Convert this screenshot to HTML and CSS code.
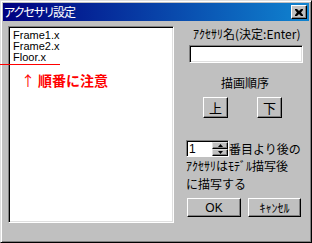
FILE: index.html
```html
<!DOCTYPE html>
<html>
<head>
    <meta charset="UTF-8">
    <meta name="viewport" content="width=device-width, initial-scale=1.0">
    <title>アクセサリ設定</title>
    <link rel="stylesheet" href="styles.css">
</head>
<body>
    <div class="window">
        <div class="title-bar">
            <div class="title-text">アクセサリ設定</div>
            <div class="close-btn">
                <svg width="8" height="7" viewBox="0 0 8 7">
                    <path d="M0 0h2l2 2 2-2h2v1l-2 2.5 2 2.5v1h-2l-2-2-2 2h-2v-1l2-2.5-2-2.5z" fill="#000"/>
                </svg>
            </div>
        </div>
        <div class="dialog-body">
            <div class="list-box">
                <div class="list-item">Frame1.x</div>
                <div class="list-item">Frame2.x</div>
                <div class="list-item">Floor.x</div>
                <div class="note"><span class="note-arrow">↑</span>順番に注意</div>
            </div>
            <div class="side-panel">
                <div class="label name-label">ｱｸｾｻﾘ名(決定:Enter)</div>
                <div class="text-box"></div>
                <div class="label order-label">描画順序</div>
                <div class="order-buttons">
                    <div class="button small-btn">上</div>
                    <div class="button small-btn">下</div>
                </div>
                <div class="spin-row">
                    <div class="spin-box">
                        <div class="spin-field">1</div>
                        <div class="spin-arrows">
                            <div class="spin-btn">
                                <svg width="5" height="3" viewBox="0 0 5 3"><path d="M2.5 0L5 3H0z" fill="#000"/></svg>
                            </div>
                            <div class="spin-btn">
                                <svg width="5" height="3" viewBox="0 0 5 3"><path d="M0 0h5L2.5 3z" fill="#000"/></svg>
                            </div>
                        </div>
                    </div>
                    <span class="label">番目より後の</span>
                </div>
                <div class="label desc">ｱｸｾｻﾘはﾓﾃﾞﾙ描写後<br>に描写する</div>
                <div class="bottom-buttons">
                    <div class="button ok-btn">OK</div>
                    <div class="button cancel-btn">ｷｬﾝｾﾙ</div>
                </div>
            </div>
        </div>
        <div class="red-line"></div>
    </div>
</body>
</html>
```

FILE: styles.css
```css
body {
    margin: 0;
    font-family: "Noto Sans CJK JP", "Liberation Sans", sans-serif;
    font-size: 12px;
    background: #c0c0c0;
}
.window {
    position: relative;
    width: 312px;
    height: 243px;
    box-sizing: border-box;
    background: #c0c0c0;
    border: 1px solid;
    border-color: #dfdfdf #000 #000 #dfdfdf;
    box-shadow: inset 1px 1px #fff, inset -1px -1px #808080;
    padding: 2px;
}
.title-bar {
    height: 18px;
    display: flex;
    align-items: center;
    justify-content: space-between;
    background: linear-gradient(to right, #000080, #1084d0);
    padding: 0 2px 0 1px;
}
.title-text {
    color: #fff;
    font-size: 12px;
    line-height: 18px;
    font-feature-settings: "palt";
    letter-spacing: -1px;
}
.close-btn {
    width: 16px;
    height: 14px;
    box-sizing: border-box;
    background: #c0c0c0;
    border: 1px solid;
    border-color: #fff #000 #000 #fff;
    box-shadow: inset -1px -1px #808080;
    display: flex;
    align-items: center;
    justify-content: center;
    padding-right: 1px;
}
.dialog-body {
    display: flex;
    padding: 5px 0 0 5px;
}
.list-box {
    width: 166px;
    height: 197px;
    box-sizing: border-box;
    background: #fff;
    border: 1px solid;
    border-color: #808080 #fff #fff #808080;
    box-shadow: inset 1px 1px #000, inset -1px -1px #dfdfdf;
    padding: 3px 3px;
}
.list-item {
    font-family: "Liberation Sans", sans-serif;
    font-size: 11px;
    line-height: 11px;
    height: 11px;
    padding-left: 1px;
    color: #000;
}
.note {
    margin-top: 9px;
    padding-left: 9px;
    color: #ff0000;
    font-size: 14px;
    font-weight: bold;
    line-height: 16px;
}
.note-arrow {
    display: inline-block;
    width: 17px;
    font-weight: normal;
}
.red-line {
    position: absolute;
    left: -1px;
    top: 63px;
    width: 60px;
    height: 1px;
    background: #ff0000;
}
.side-panel {
    margin-left: 12px;
    width: 118px;
    display: flex;
    flex-direction: column;
}
.label {
    color: #000;
    font-size: 12px;
    line-height: 13px;
    white-space: nowrap;
}
.name-label {
    margin-top: 1px;
    padding-left: 7px;
}
.text-box {
    margin-top: 5px;
    margin-left: 3px;
    width: 114px;
    height: 18px;
    box-sizing: border-box;
    background: #fff;
    border: 1px solid;
    border-color: #808080 #fff #fff #808080;
    box-shadow: inset 1px 1px #000, inset -1px -1px #dfdfdf;
}
.order-label {
    margin-top: 13px;
    text-align: center;
}
.order-buttons {
    display: flex;
    gap: 29px;
    margin-top: 8px;
    padding-left: 17px;
}
.button {
    box-sizing: border-box;
    background: #c0c0c0;
    border: 1px solid;
    border-color: #fff #000 #000 #fff;
    box-shadow: inset -1px -1px #808080;
    display: flex;
    align-items: center;
    justify-content: center;
    color: #000;
    font-size: 12px;
}
.small-btn {
    width: 25px;
    height: 21px;
    font-size: 13px;
}
.spin-row {
    display: flex;
    align-items: center;
    margin-top: 21px;
    height: 18px;
}
.spin-box {
    display: flex;
    width: 43px;
    height: 17px;
    box-sizing: border-box;
    background: #fff;
    border: 1px solid;
    border-color: #808080 #fff #fff #808080;
    box-shadow: inset 1px 1px #000;
    padding: 1px 0 0 1px;
}
.spin-field {
    flex: 1;
    font-family: "Liberation Sans", sans-serif;
    font-size: 12px;
    line-height: 14px;
    padding-left: 1px;
}
.spin-arrows {
    width: 16px;
    display: flex;
    flex-direction: column;
}
.spin-btn {
    flex: 1;
    box-sizing: border-box;
    background: #c0c0c0;
    border: 1px solid;
    border-color: #dfdfdf #000 #000 #dfdfdf;
    box-shadow: inset -1px -1px #808080;
    display: flex;
    align-items: center;
    justify-content: center;
}
.desc {
    line-height: 18px;
}
.bottom-buttons {
    display: flex;
    margin-top: 5px;
}
.ok-btn {
    margin-left: 1px;
    width: 54px;
    height: 19px;
    font-family: "Liberation Sans", sans-serif;
}
.cancel-btn {
    margin-left: 7px;
    width: 53px;
    height: 19px;
}
```
